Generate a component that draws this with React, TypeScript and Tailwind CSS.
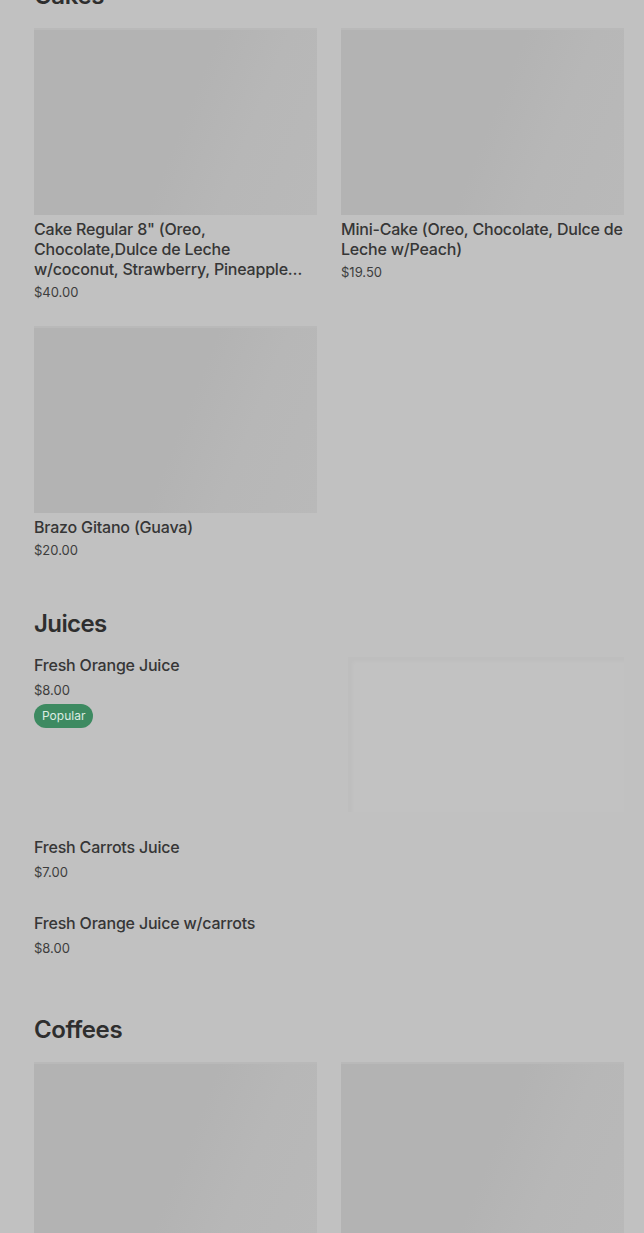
const font = { fontFamily: "Inter, 'Liberation Sans', sans-serif" };

interface IItem {
  name: string;
  price: string;
}

const cakes: IItem[] = [
  {
    name: 'Cake Regular 8" (Oreo, Chocolate,Dulce de Leche w/coconut, Strawberry, Pineapple w/Cream Cheese, Guava)',
    price: "$40.00",
  },
  { name: "Mini-Cake (Oreo, Chocolate, Dulce de Leche w/Peach)", price: "$19.50" },
  { name: "Brazo Gitano (Guava)", price: "$20.00" },
];

const coffees: IItem[] = [
  { name: "Cafe Cubano", price: "$2.50" },
  { name: "Cortadito", price: "$3.00" },
];

function Placeholder() {
  return (
    <div className="h-[187px] w-full bg-[linear-gradient(112deg,#b3b3b3_0%,#b3b3b3_52%,#b7b7b7_72%,#b9b9b9_100%)] shadow-[inset_0_2px_0_#b9b9b9]" />
  );
}

function ProductCard({ name, price }: IItem) {
  return (
    <figure className="flex w-full flex-col">
      <Placeholder />
      <figcaption className="mt-1 flex flex-col">
        <p
          className="line-clamp-3 text-[16px] leading-5 font-medium tracking-[-0.2px] text-[#363636]"
          title={name}
        >
          {name}
        </p>
        <p className="mt-[3px] text-[13px] leading-5 text-[#3d3d3d]">{price}</p>
      </figcaption>
    </figure>
  );
}

function SectionTitle({ children }: { children: string }) {
  return (
    <h2 className="mb-4 text-[24px] leading-8 font-semibold tracking-[-0.4px] text-[#2e2e2e]">
      {children}
    </h2>
  );
}

function JuiceRow({
  name,
  price,
  popular,
  withImage,
  className,
}: IItem & { popular?: boolean; withImage?: boolean; className?: string }) {
  return (
    <div className={`flex w-full flex-row justify-between ${className ?? ""}`}>
      <div className="flex flex-col">
        <p className="text-[16px] leading-5 font-medium tracking-[-0.2px] text-[#363636]">{name}</p>
        <p className="mt-[5px] text-[13px] leading-5 text-[#3d3d3d]">{price}</p>
        {popular && (
          <span className="mt-1 w-fit rounded-full bg-[#3d8a61] px-2 text-[12px] leading-6 text-[#dcece2]">
            Popular
          </span>
        )}
      </div>
      {withImage && (
        <div className="mt-[2px] h-[155px] w-[276px] bg-[#c2c2c2] shadow-[inset_4px_4px_4px_rgba(0,0,0,0.025)]" />
      )}
    </div>
  );
}

export default function App() {
  return (
    <main className="min-h-screen overflow-hidden bg-[#c1c1c1] pr-[20px] pl-[34px]" style={font}>
      <section className="-mt-[20px]">
        <SectionTitle>Cakes</SectionTitle>
        <div className="grid grid-cols-2 gap-x-6 gap-y-6">
          {cakes.map((item) => (
            <ProductCard key={item.name} {...item} />
          ))}
        </div>
      </section>

      <section className="mt-[48px]">
        <h2 className="mb-[15px] text-[24px] leading-8 font-semibold tracking-[-0.6px] text-[#2e2e2e]">
          Juices
        </h2>
        <div className="flex flex-col">
          <JuiceRow name="Fresh Orange Juice" price="$8.00" popular withImage />
          <JuiceRow name="Fresh Carrots Juice" price="$7.00" className="mt-[25px]" />
          <JuiceRow name="Fresh Orange Juice w/carrots" price="$8.00" className="mt-[31px]" />
        </div>
      </section>

      <section className="mt-[56px]">
        <SectionTitle>Coffees</SectionTitle>
        <div className="grid grid-cols-2 gap-x-6 gap-y-6">
          {coffees.map((item) => (
            <ProductCard key={item.name} {...item} />
          ))}
        </div>
      </section>
    </main>
  );
}
